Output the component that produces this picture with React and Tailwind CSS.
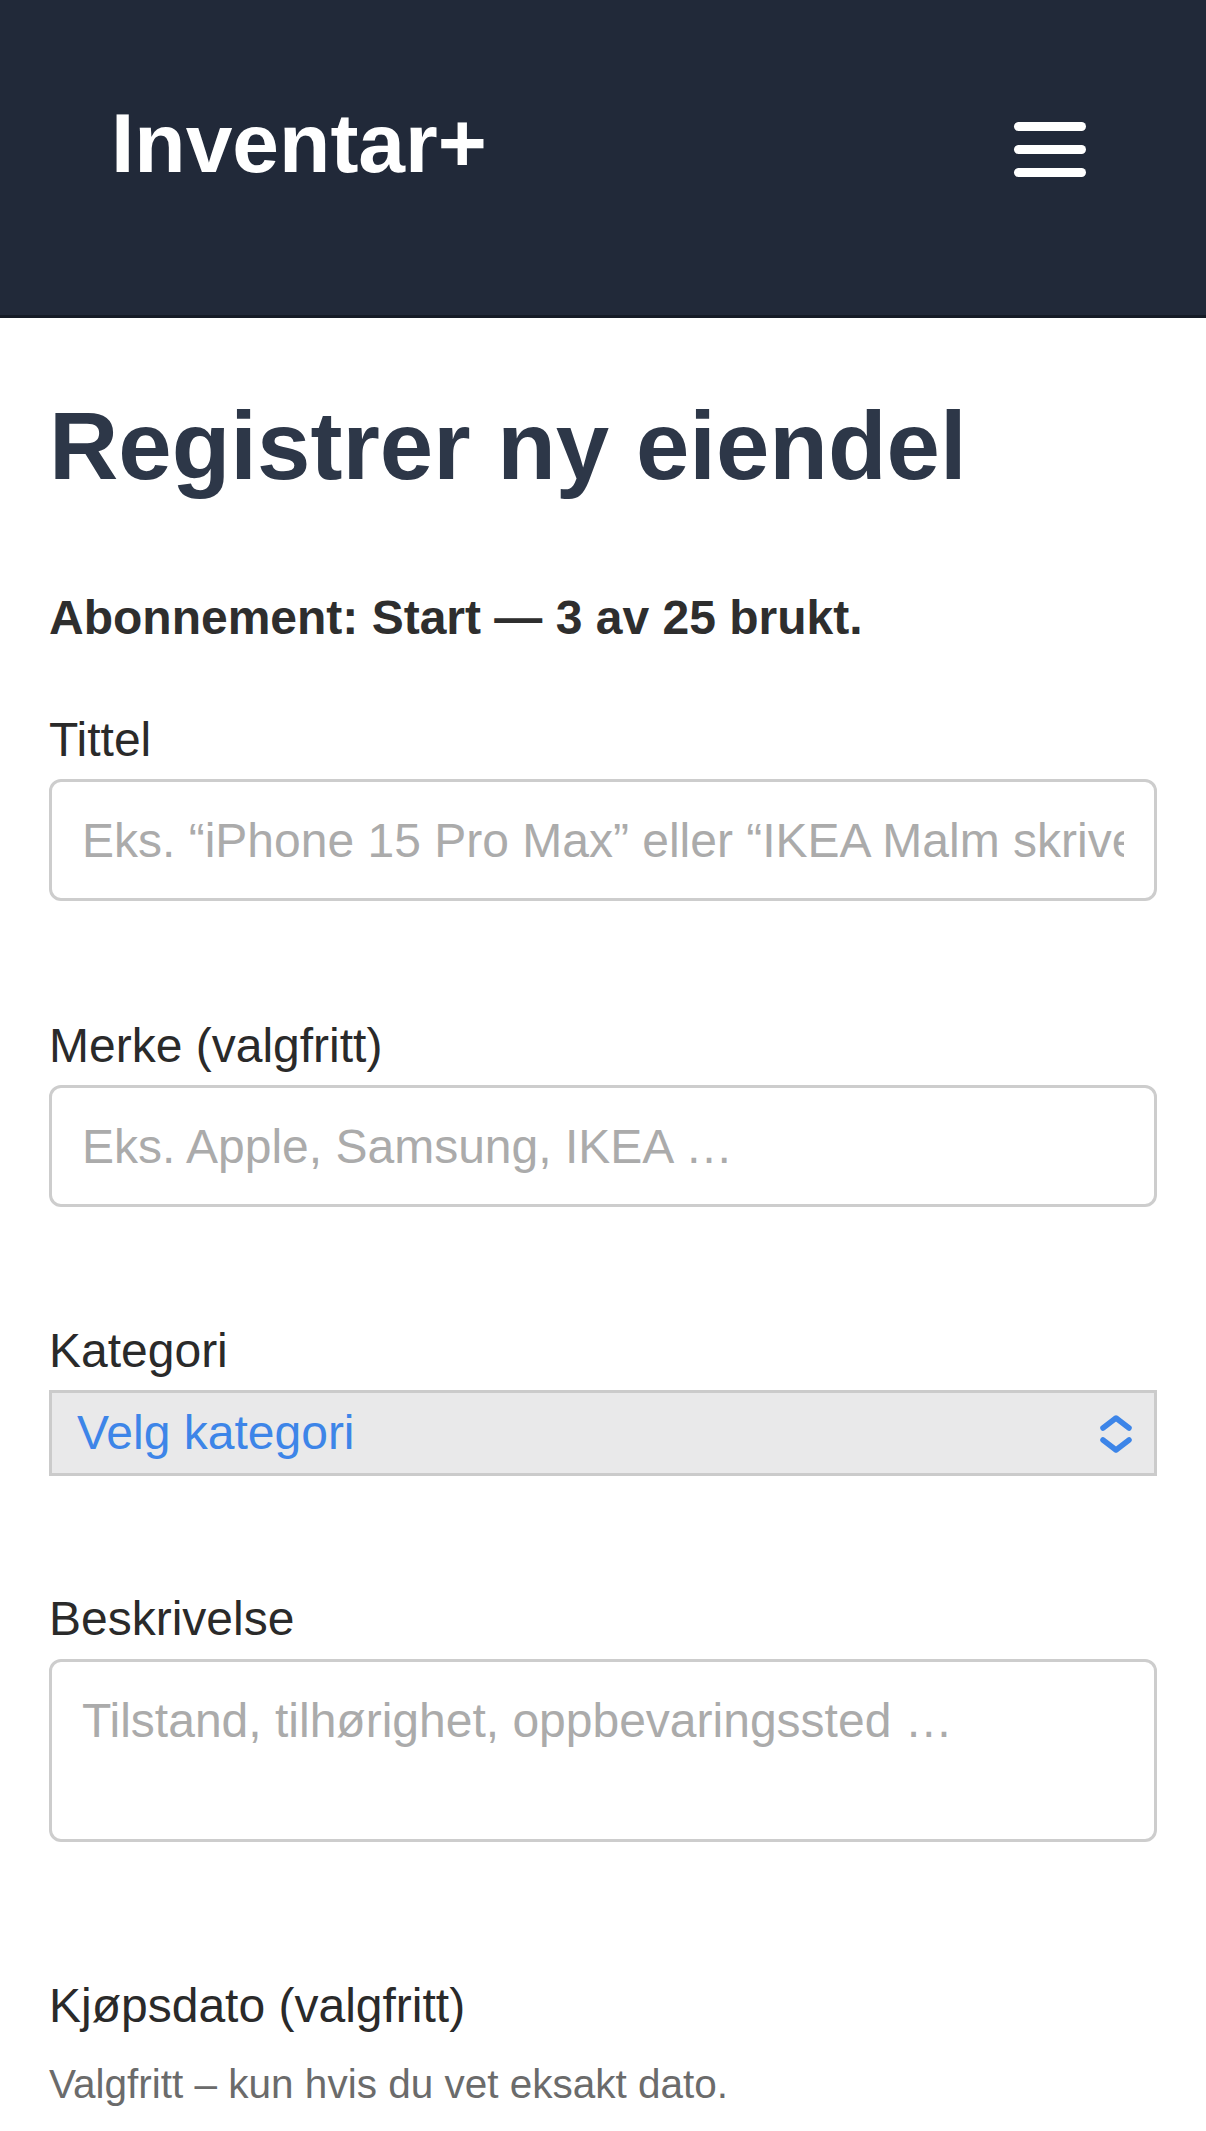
import { useState } from "react";

const font = { fontFamily: '"Liberation Sans", Arial, sans-serif' };

function Field({ label, className = "", children }) {
  return (
    <div className={className}>
      <label className="block text-[48px] leading-none text-[#2a2a2a]">{label}</label>
      {children}
    </div>
  );
}

export default function App() {
  const [category, setCategory] = useState("");

  return (
    <div className="min-h-screen bg-white" style={font}>
      {/* Header */}
      <header className="h-[318px] bg-[#212939] border-b-[3px] border-[#151b26] flex items-start justify-between pl-[111px] pr-[120px] pt-[101px]">
        <span className="text-[84px] leading-none font-bold text-white">Inventar+</span>
        <button className="mt-[21px] flex flex-col gap-[14px]">
          <span className="block w-[72px] h-[9px] rounded-full bg-white"></span>
          <span className="block w-[72px] h-[9px] rounded-full bg-white"></span>
          <span className="block w-[72px] h-[9px] rounded-full bg-white"></span>
        </button>
      </header>

      <main className="px-[49px]">
        <h1 className="mt-[80px] text-[96px] leading-none font-bold text-[#2d3748]">
          Registrer ny eiendel
        </h1>

        <p className="mt-[100px] text-[48px] leading-none font-bold text-[#2e2e2e]">
          Abonnement: Start — 3 av 25 brukt.
        </p>

        <Field label="Tittel" className="mt-[74px]">
          <input
            type="text"
            placeholder="Eks. “iPhone 15 Pro Max” eller “IKEA Malm skrivebord”"
            className="mt-[15px] w-full h-[122px] border-[3px] border-[#cdcdcd] rounded-[12px] px-[30px] text-[48px] text-[#222] placeholder:text-[#ababab] outline-none"
          />
        </Field>

        <Field label="Merke (valgfritt)" className="mt-[121px]">
          <input
            type="text"
            placeholder="Eks. Apple, Samsung, IKEA …"
            className="mt-[15px] w-full h-[122px] border-[3px] border-[#cdcdcd] rounded-[12px] px-[30px] text-[48px] text-[#222] placeholder:text-[#ababab] outline-none"
          />
        </Field>

        <Field label="Kategori" className="mt-[120px]">
          <div className="relative mt-[15px]">
            <select
              value={category}
              onChange={(e) => setCategory(e.target.value)}
              className="appearance-none w-full h-[86px] border-[3px] border-[#cbcbcb] bg-[#e9e9ea] pl-[25px] pr-[80px] text-[48px] text-[#3d85e8] outline-none rounded-none"
            >
              <option value="">Velg kategori</option>
              <option value="elektronikk">Elektronikk</option>
              <option value="mobler">Møbler</option>
            </select>
            {/* up/down chevrons */}
            <svg
              className="absolute right-[21px] top-[23px] pointer-events-none"
              width="40"
              height="44"
              viewBox="0 0 40 44"
              fill="none"
              stroke="#3d85e8"
              strokeWidth="5.5"
              strokeLinecap="round"
              strokeLinejoin="round"
            >
              <path d="M7 15 L20 5 L33 15" />
              <path d="M7 27 L20 37 L33 27" />
            </svg>
          </div>
        </Field>

        <Field label="Beskrivelse" className="mt-[119px]">
          <textarea
            placeholder="Tilstand, tilhørighet, oppbevaringssted …"
            className="mt-[16px] block w-full h-[183px] border-[3px] border-[#cdcdcd] rounded-[12px] px-[30px] pt-[30px] text-[48px] leading-[1.2] text-[#222] placeholder:text-[#ababab] outline-none resize-none"
          />
        </Field>

        <Field label="Kjøpsdato (valgfritt)" className="mt-[140px]">
          <p className="mt-[34px] text-[40.5px] leading-none text-[#6b6b6b]">
            Valgfritt – kun hvis du vet eksakt dato.
          </p>
          <input
            type="text"
            className="mt-[26px] w-full h-[122px] border-[3px] border-[#d4d4d4] rounded-[12px] px-[30px] text-[48px] outline-none"
          />
        </Field>
      </main>
    </div>
  );
}
